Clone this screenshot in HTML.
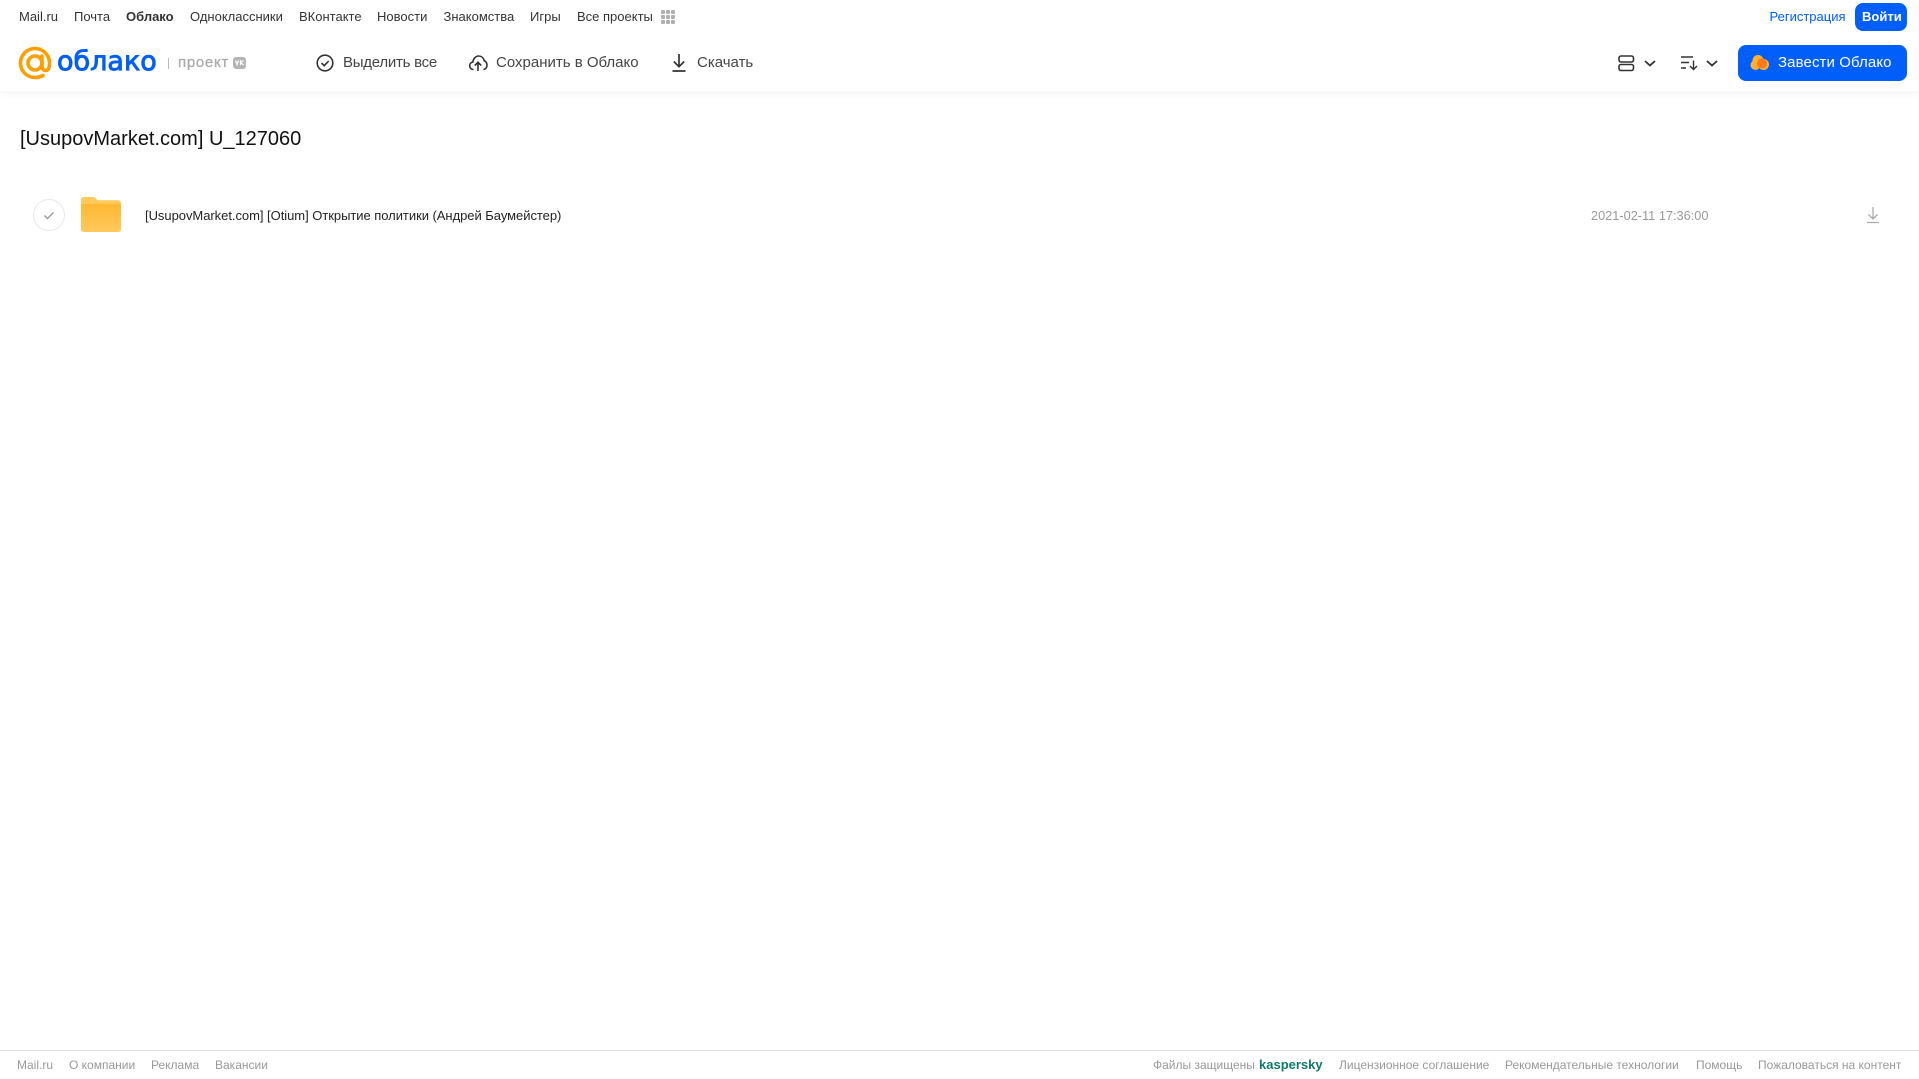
<!DOCTYPE html>
<html lang="ru"><head><meta charset="utf-8"><title>Облако</title>
<style>
html,body{margin:0;padding:0;background:#fff;width:1919px;height:1079px;overflow:hidden}
body{position:relative;font-family:"Liberation Sans",Arial,sans-serif}
.t{position:absolute;white-space:nowrap;line-height:20px}
.n{top:7px;font-size:13px;color:#333}
.b{top:52px;font-size:15px;color:#444;line-height:22px}
.f{top:1055px;font-size:12px;color:#999}
#hd{position:absolute;left:0;top:0;width:1919px;height:91px;background:#fff;box-shadow:0 2px 8px rgba(0,0,0,.06)}
#ln{position:absolute;left:0;top:1050px;width:1919px;height:1px;background:#ddd}
.btn{position:absolute;background:#005ff9;border-radius:8px}
svg{position:absolute;left:0;top:0}
</style></head><body>
<div id="hd"></div><div id="ln"></div>
<div class="btn" style="left:1855px;top:3px;width:52px;height:28px"></div>
<div class="btn" style="left:1738px;top:45px;width:169px;height:36px"></div>

<svg width="1919" height="1079" viewBox="0 0 1919 1079" fill="none">
<defs><linearGradient id="g" x1="0" y1="0" x2="0" y2="1"><stop offset="0" stop-color="#ffb833"/><stop offset="1" stop-color="#ffc95c"/></linearGradient></defs>
<!-- @ logo -->
<path d="M42 56v10c0 3 1.800 4.500 3.800 4.500 2.500 0 3.700-3 3.700-7.500 0-8-6.500-14.500-14.500-14.500S20.500 55 20.500 63 27 77.500 35 77.500c3 0 5.500-.7 8-2" stroke="#ff9e00" stroke-width="3.600" stroke-linecap="round"/>
<circle cx="35" cy="63" r="7" stroke="#ff9e00" stroke-width="3.600"/>
<rect x="168" y="58" width="1" height="11" fill="#bbb"/>
<!-- VK badge -->
<rect x="233" y="57" width="13" height="12" rx="3" fill="#b5b5b5"/>
<path d="M235.500 60.500l1.500 4 1.500-4M240.500 60v5M243.500 60.500l-3 2 3 2.500" stroke="#fff" stroke-width="1.200"/>
<!-- grid -->
<g fill="#b0b0b0"><rect x="661" y="10" width="4" height="4" rx="1"/><rect x="666" y="10" width="4" height="4" rx="1"/><rect x="671" y="10" width="4" height="4" rx="1"/><rect x="661" y="15" width="4" height="4" rx="1"/><rect x="666" y="15" width="4" height="4" rx="1"/><rect x="671" y="15" width="4" height="4" rx="1"/><rect x="661" y="20" width="4" height="4" rx="1"/><rect x="666" y="20" width="4" height="4" rx="1"/><rect x="671" y="20" width="4" height="4" rx="1"/></g>
<!-- check circle -->
<circle cx="325" cy="63" r="7.800" stroke="#333" stroke-width="1.600"/>
<path d="M321.500 63l2.700 2.700 4.500-4.700" stroke="#333" stroke-width="1.600"/>
<!-- cloud upload -->
<path d="M473.500 69.500c-2.500 0-3.800-1.800-3.800-3.700 0-1.900 1.300-3.500 3.200-3.800.4-3.600 2.800-6 5.700-6 2.800 0 5 1.900 5.600 4.700 1.700.5 2.800 2.600 2.800 4.500 0 2.200-1.500 4.200-3.500 4.300" stroke="#333" stroke-width="1.600"/>
<path d="M478 71v-8M474.800 65.500l3.200-3.200 3.200 3.200" stroke="#333" stroke-width="1.600"/>
<!-- download -->
<path d="M679 54v12M673.800 61.500l5.200 5.200 5.200-5.200M672.500 71h13" stroke="#333" stroke-width="1.700"/>
<!-- view -->
<rect x="1619" y="56" width="14.500" height="6" rx="2" stroke="#333" stroke-width="1.600"/>
<rect x="1619" y="64.500" width="14.500" height="6" rx="2" stroke="#333" stroke-width="1.600"/>
<path d="M1645 61l5 4.500 5-4.500" stroke="#333" stroke-width="1.800"/>
<!-- sort -->
<path d="M1681 57h12M1681 62.500h8M1681 68h5M1693.500 60.500v8.500M1690 66l3.500 3.500 3.500-3.500" stroke="#333" stroke-width="1.400"/>
<path d="M1707 61l5 4.500 5-4.500" stroke="#333" stroke-width="1.800"/>
<!-- cloud in button -->
<g fill="#ffb02e"><circle cx="1755.500" cy="65" r="5"/><circle cx="1758" cy="60.500" r="5.500"/><circle cx="1763.500" cy="64.500" r="5.500"/></g>
<circle cx="1762" cy="63.500" r="5" fill="#ff7a1a"/>
<!-- row -->
<circle cx="49" cy="215" r="15.500" stroke="#e9e9e9"/>
<path d="M44.500 215.500l3 3 6-6" stroke="#999" stroke-width="1.400"/>
<path d="M81 200c0-1.700 1.300-3 3-3h9c1.500 0 2.300.6 3 1.500l1.500 1.700H118c1.700 0 3 1.300 3 3V229c0 1.700-1.300 3-3 3H84c-1.700 0-3-1.300-3-3z" fill="#ffc95c"/>
<path d="M81 206c0-1.200.9-2 2-2h36c1.100 0 2 .8 2 2v23c0 1.700-1.300 3-3 3H84c-1.700 0-3-1.300-3-3z" fill="url(#g)"/>
<path d="M1873 207v12M1868.500 214.500l4.500 4.500 4.500-4.500M1867 222.500h12" stroke="#aaa" stroke-width="1.300"/>
</svg>

<div class="t n" style="left:19px">Mail.ru</div>
<div class="t n" style="left:74px">Почта</div>
<div class="t n" style="left:126px;font-weight:bold">Облако</div>
<div class="t n" style="left:190px">Одноклассники</div>
<div class="t n" style="left:299px">ВКонтакте</div>
<div class="t n" style="left:377px">Новости</div>
<div class="t n" style="left:443.500px">Знакомства</div>
<div class="t n" style="left:530px">Игры</div>
<div class="t n" style="left:577px">Все проекты</div>
<div class="t n" style="left:1769.500px;color:#005ff9">Регистрация</div>
<div class="t n" style="left:1862px;color:#fff;font-weight:bold">Войти</div>

<div class="t" style="left:57px;top:44px;font-family:'DejaVu Sans',sans-serif;font-size:27px;line-height:36px;color:#005ff9;-webkit-text-stroke:.9px #005ff9">облако</div>
<div class="t" style="left:178px;top:52px;font-size:15px;line-height:22px;color:#aaa;letter-spacing:.7px;-webkit-text-stroke:.3px #aaa">проект</div>

<div class="t b" style="left:343px;letter-spacing:-.25px">Выделить все</div>
<div class="t b" style="left:496px">Сохранить в Облако</div>
<div class="t b" style="left:697px">Скачать</div>
<div class="t b" style="left:1778px;color:#fff;letter-spacing:.1px">Завести Облако</div>

<div class="t" style="left:20px;top:125px;font-size:20px;line-height:28px;color:#111">[UsupovMarket.com] U_127060</div>
<div class="t" style="left:145px;top:206px;font-size:13px;color:#222;letter-spacing:-.04px">[UsupovMarket.com] [Otium] Открытие политики (Андрей Баумейстер)</div>
<div class="t" style="left:1591px;top:206px;font-size:12.750px;color:#999">2021-02-11 17:36:00</div>

<div class="t f" style="left:17px">Mail.ru</div>
<div class="t f" style="left:69px">О компании</div>
<div class="t f" style="left:151px">Реклама</div>
<div class="t f" style="left:215px">Вакансии</div>
<div class="t f" style="left:1153px">Файлы защищены</div>
<div class="t f" style="left:1259px;color:#0f7a68;font-weight:bold;font-size:13px">kaspersky</div>
<div class="t f" style="left:1339px">Лицензионное соглашение</div>
<div class="t f" style="left:1505px">Рекомендательные технологии</div>
<div class="t f" style="left:1696px">Помощь</div>
<div class="t f" style="left:1758px">Пожаловаться на контент</div>
</body></html>
